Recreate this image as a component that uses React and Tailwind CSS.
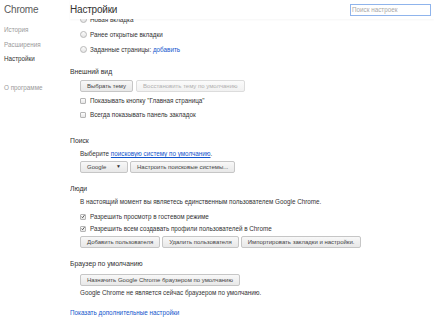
import React from "react";

const Radio = ({ children }) => (
  <div className="flex items-center gap-[3px] h-[15px]">
    <span className="w-[7px] h-[7px] rounded-full border border-[#b8b8b8] bg-gradient-to-b from-[#fdfdfd] to-[#e4e4e4]"></span>
    <span>{children}</span>
  </div>
);

const Check = ({ checked, children, className = "" }) => (
  <div className={`flex items-center gap-[4px] ${className}`}>
    <span className="w-[6px] h-[6px] rounded-[1px] border border-[#b5b5b5] bg-gradient-to-b from-[#fdfdfd] to-[#e6e6e6] flex items-center justify-center">
      {checked && (
        <svg viewBox="0 0 8 8" className="w-[7px] h-[7px] -mt-[1px]">
          <path d="M1 4.2 L3.2 6.4 L7 1.2" fill="none" stroke="#333" strokeWidth="1.6" />
        </svg>
      )}
    </span>
    <span>{children}</span>
  </div>
);

const Btn = ({ children, disabled, className = "" }) => (
  <div
    className={`h-[12px] px-[6px] flex items-center text-[6px] rounded-[2px] border border-[#c6c6c6] bg-gradient-to-b from-[#f8f8f8] to-[#e8e8e8] ${
      disabled ? "text-[#b0b0b0] border-[#dcdcdc] from-[#fbfbfb] to-[#f1f1f1]" : "text-[#444]"
    } ${className}`}
  >
    {children}
  </div>
);

const Heading = ({ children, className = "" }) => (
  <div className={`text-[#303030] text-[6.8px] h-[14px] flex items-center -ml-[10px] ${className}`}>{children}</div>
);

export default function App() {
  return (
    <div className="w-[434px] h-[322px] overflow-hidden bg-white flex font-['Liberation_Sans',Arial,sans-serif] text-[6.3px] text-[#333]">
      {/* Sidebar */}
      <div className="w-[70px] pl-[4px] shrink-0">
        <div className="h-[19px] flex items-center text-[10px] text-[#5a5a5a] tracking-[-0.2px]">Chrome</div>
        <div className="mt-[4px] flex flex-col text-[#9a9a9a]">
          <div className="h-[14px] flex items-center">История</div>
          <div className="h-[15px] flex items-center">Расширения</div>
          <div className="h-[14px] flex items-center text-[#333]">Настройки</div>
          <div className="h-[15px]"></div>
          <div className="h-[14px] flex items-center">О программе</div>
        </div>
      </div>

      {/* Main */}
      <div className="flex-1 flex flex-col min-w-0">
        <div className="h-[19px] flex items-center justify-between pr-[3px] relative z-10 bg-white shadow-[0_1px_2px_rgba(0,0,0,0.04)]">
          <div className="text-[10px] text-[#333] tracking-[-0.2px]">Настройки</div>
          <div className="w-[81px] h-[12px] border border-[#8fb4ec] flex items-center px-[1px] text-[#a8a8a8]">
            Поиск настроек
          </div>
        </div>

        <div className="flex-1 overflow-hidden pl-[10px]">
          <div className="-mt-[7px]">
            <Radio>Новая вкладка</Radio>
            <Radio>Ранее открытые вкладки</Radio>
            <Radio>
              Заданные страницы: <span className="text-[#1155cc]">добавить</span>
            </Radio>

            <Heading className="mt-[8px]">Внешний вид</Heading>
            <div className="flex gap-[3px] mt-[1px]">
              <Btn>Выбрать тему</Btn>
              <Btn disabled>Восстановить тему по умолчанию</Btn>
            </div>
            <div className="mt-[2px]">
              <Check className="h-[14px]">Показывать кнопку "Главная страница"</Check>
              <Check className="h-[14px]">Всегда показывать панель закладок</Check>
            </div>

            <Heading className="mt-[12px]">Поиск</Heading>
            <div className="h-[12px] flex items-center">
              Выберите&nbsp;<span className="text-[#1155cc] underline">поисковую систему по умолчанию</span>.
            </div>
            <div className="flex gap-[2px] mt-[1px]">
              <Btn className="w-[48px] justify-between">
                <span>Google</span>
                <span className="text-[5px] text-[#333]">▼</span>
              </Btn>
              <Btn>Настроить поисковые системы...</Btn>
            </div>

            <Heading className="mt-[9px]">Люди</Heading>
            <div className="h-[11px] flex items-center">
              В настоящий момент вы являетесь единственным пользователем Google Chrome.
            </div>
            <div className="mt-[4px]">
              <Check checked className="h-[12px]">Разрешить просмотр в гостевом режиме</Check>
              <Check checked className="h-[12px]">Разрешить всем создавать профили пользователей в Chrome</Check>
            </div>
            <div className="flex gap-[2px] mt-[1px]">
              <Btn>Добавить пользователя</Btn>
              <Btn>Удалить пользователя</Btn>
              <Btn>Импортировать закладки и настройки.</Btn>
            </div>

            <Heading className="mt-[9px]">Браузер по умолчанию</Heading>
            <Btn className="w-fit mt-[3px]">Назначить Google Chrome браузером по умолчанию</Btn>
            <div className="h-[10px] flex items-center mt-[2px]">
              Google Chrome не является сейчас браузером по умолчанию.
            </div>

            <div className="h-[14px] flex items-center -ml-[10px] mt-[8px] text-[#1155cc]">
              Показать дополнительные настройки
            </div>
          </div>
        </div>
      </div>
    </div>
  );
}
